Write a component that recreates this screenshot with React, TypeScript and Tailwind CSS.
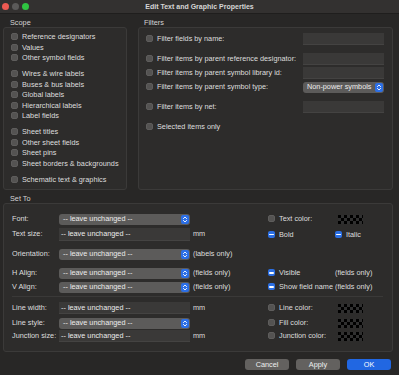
import React from 'react';

const scopeGroups: string[][] = [
  ['Reference designators', 'Values', 'Other symbol fields'],
  ['Wires & wire labels', 'Buses & bus labels', 'Global labels', 'Hierarchical labels', 'Label fields'],
  ['Sheet titles', 'Other sheet fields', 'Sheet pins', 'Sheet borders & backgrounds'],
  ['Schematic text & graphics'],
];

const Check = ({ on = false }: { on?: boolean }) =>
  on ? (
    <span className="w-[7px] h-[7px] shrink-0 rounded-[2px] bg-[#2b6fe3] flex items-center justify-center">
      <span className="w-[4.5px] h-[1.5px] bg-white rounded-[1px]" />
    </span>
  ) : (
    <span className="w-[7px] h-[7px] shrink-0 rounded-[2px] bg-[#545352] border border-[#5e5d5c]" />
  );

const Chevrons = () => (
  <span className="w-[8px] h-[9px] rounded-[2px] bg-[#2c6fe6] flex items-center justify-center">
    <svg width="8" height="9" viewBox="0 0 8 9" fill="none" stroke="white" strokeWidth="0.9" strokeLinecap="round" strokeLinejoin="round">
      <path d="M2.4 3.6 L4 2 L5.6 3.6" />
      <path d="M2.4 5.4 L4 7 L5.6 5.4" />
    </svg>
  </span>
);

const Select = ({ value, className = '' }: { value: string; className?: string }) => (
  <div className={`h-[11px] rounded-[3px] bg-[#5c5b5a] flex items-center justify-between pl-[4px] pr-[1px] text-[#ececec] ${className}`}>
    <span className="leading-none whitespace-nowrap">{value}</span>
    <Chevrons />
  </div>
);

const Input = ({ value = '', className = '' }: { value?: string; className?: string }) => (
  <div className={`h-[12px] bg-[#3a3938] border-b border-[#444342] flex items-center pl-[2px] text-[#ececec] ${className}`}>
    <span className="leading-none whitespace-nowrap">{value}</span>
  </div>
);

const Swatch = () => (
  <svg width="25" height="9" className="block">
    <defs>
      <pattern id="chk" width="6" height="6" patternUnits="userSpaceOnUse">
        <rect width="6" height="6" fill="#303030" />
        <rect width="3" height="3" fill="#000" />
        <rect x="3" y="3" width="3" height="3" fill="#000" />
      </pattern>
    </defs>
    <rect width="25" height="9" fill="url(#chk)" />
  </svg>
);

const CheckLabel = ({ label, on = false }: { label: string; on?: boolean }) => (
  <div className="flex items-center gap-[4px]">
    <Check on={on} />
    <span className="leading-none whitespace-nowrap">{label}</span>
  </div>
);

const row = 'h-[12px] grid grid-cols-[47px_131px_78px_67px_1fr] items-center';

export default function App() {
  return (
    <div className="w-[399px] h-[375px] bg-[#282726] flex flex-col text-[7.3px] text-[#dedede] font-['Liberation_Sans',Arial,sans-serif] overflow-hidden">
      {/* Title bar */}
      <div className="h-[14px] shrink-0 bg-[#333130] border-b border-[#1f1e1d] grid grid-cols-[1fr_auto_1fr] items-center">
        <div className="flex items-center gap-[3px] pl-[2px]">
          <span className="w-[7px] h-[7px] rounded-full bg-[#ee5a52]" />
          <span className="w-[7px] h-[7px] rounded-full bg-[#5b5a59]" />
          <span className="w-[7px] h-[7px] rounded-full bg-[#2fc441]" />
        </div>
        <span className="font-bold text-[7px] text-[#d6d6d6] leading-none">Edit Text and Graphic Properties</span>
        <div />
      </div>

      {/* Scope + Filters */}
      <div className="flex gap-[11px] pl-[3px] pr-[6px] pt-[4px]">
        <div className="w-[124px] flex flex-col">
          <div className="h-[9px] pl-[7px] leading-[9px] text-[#d4d4d4]">Scope</div>
          <div className="h-[163px] border border-[#3b3a39] rounded-[3px] bg-[#2d2c2b] pt-[3.75px] flex flex-col">
            {scopeGroups.map((g, gi) => (
              <div key={gi} className={gi === 0 ? '' : gi === 3 ? 'mt-[6px]' : 'mt-[5.5px]'}>
                {g.map((item) => (
                  <div key={item} className="h-[10.5px] flex items-center pl-[7px]">
                    <CheckLabel label={item} />
                  </div>
                ))}
              </div>
            ))}
          </div>
        </div>

        <div className="flex-1 flex flex-col">
          <div className="h-[9px] pl-[6px] leading-[9px] text-[#d4d4d4]">Filters</div>
          <div className="h-[163px] border border-[#3b3a39] rounded-[3px] bg-[#2d2c2b] pt-[5px] pl-[7px] pr-[8px] flex flex-col">
            <div className="h-[12px] flex items-center justify-between">
              <CheckLabel label="Filter fields by name:" />
              <Input className="w-[81px]" />
            </div>
            <div className="h-[12px] mt-[8px] flex items-center justify-between">
              <CheckLabel label="Filter items by parent reference designator:" />
              <Input className="w-[81px]" />
            </div>
            <div className="h-[12px] mt-[2px] flex items-center justify-between">
              <CheckLabel label="Filter items by parent symbol library id:" />
              <Input className="w-[81px]" />
            </div>
            <div className="h-[12px] mt-[2px] flex items-center justify-between">
              <CheckLabel label="Filter items by parent symbol type:" />
              <Select value="Non-power symbols" className="w-[81px]" />
            </div>
            <div className="h-[12px] mt-[8px] flex items-center justify-between">
              <CheckLabel label="Filter items by net:" />
              <Input className="w-[81px]" />
            </div>
            <div className="h-[12px] mt-[8px] flex items-center">
              <CheckLabel label="Selected items only" />
            </div>
          </div>
        </div>
      </div>

      {/* Set To */}
      <div className="pl-[3px] pr-[6px] mt-[4px] flex flex-col">
        <div className="h-[9px] pl-[7px] leading-[9px] text-[#d4d4d4]">Set To</div>
        <div className="h-[149px] border border-[#3b3a39] rounded-[3px] bg-[#2d2c2b] pt-[9px] pl-[8px] pr-[9px] flex flex-col">
          <div className={row}>
            <span>Font:</span>
            <Select value="-- leave unchanged --" />
            <span />
            <CheckLabel label="Text color:" />
            <div className="pl-[3px]"><Swatch /></div>
          </div>
          <div className={`${row} mt-[3px]`}>
            <span>Text size:</span>
            <Input value="-- leave unchanged --" className="h-[13px]" />
            <span className="pl-[3px]">mm</span>
            <CheckLabel label="Bold" on />
            <CheckLabel label="Italic" on />
          </div>
          <div className={`${row} mt-[8px]`}>
            <span>Orientation:</span>
            <Select value="-- leave unchanged --" />
            <span className="pl-[3px]">(labels only)</span>
          </div>
          <div className={`${row} mt-[7px]`}>
            <span>H Align:</span>
            <Select value="-- leave unchanged --" />
            <span className="pl-[3px]">(fields only)</span>
            <CheckLabel label="Visible" on />
            <span>(fields only)</span>
          </div>
          <div className={`${row} mt-[2px]`}>
            <span>V Align:</span>
            <Select value="-- leave unchanged --" />
            <span className="pl-[3px]">(fields only)</span>
            <CheckLabel label="Show field name" on />
            <span>(fields only)</span>
          </div>
          <div className="h-px mt-[3px] bg-[#3a3938]" />
          <div className={`${row} mt-[5px]`}>
            <span>Line width:</span>
            <Input value="-- leave unchanged --" />
            <span className="pl-[3px]">mm</span>
            <CheckLabel label="Line color:" />
            <div className="pl-[3px]"><Swatch /></div>
          </div>
          <div className={`${row} mt-[3px]`}>
            <span>Line style:</span>
            <Select value="-- leave unchanged --" />
            <span />
            <CheckLabel label="Fill color:" />
            <div className="pl-[3px]"><Swatch /></div>
          </div>
          <div className={`${row} mt-[1px]`}>
            <span className="whitespace-nowrap">Junction size:</span>
            <Input value="-- leave unchanged --" />
            <span className="pl-[3px]">mm</span>
            <CheckLabel label="Junction color:" />
            <div className="pl-[3px]"><Swatch /></div>
          </div>
        </div>
      </div>

      {/* Buttons */}
      <div className="mt-[7px] pr-[8px] flex justify-end gap-[7px]">
        <button className="w-[44px] h-[11px] rounded-[3px] bg-[#63615f] text-[#efefef] leading-none">Cancel</button>
        <button className="w-[44px] h-[11px] rounded-[3px] bg-[#63615f] text-[#efefef] leading-none">Apply</button>
        <button className="w-[44px] h-[11px] rounded-[3px] bg-[#2167e2] text-white leading-none">OK</button>
      </div>
    </div>
  );
}
